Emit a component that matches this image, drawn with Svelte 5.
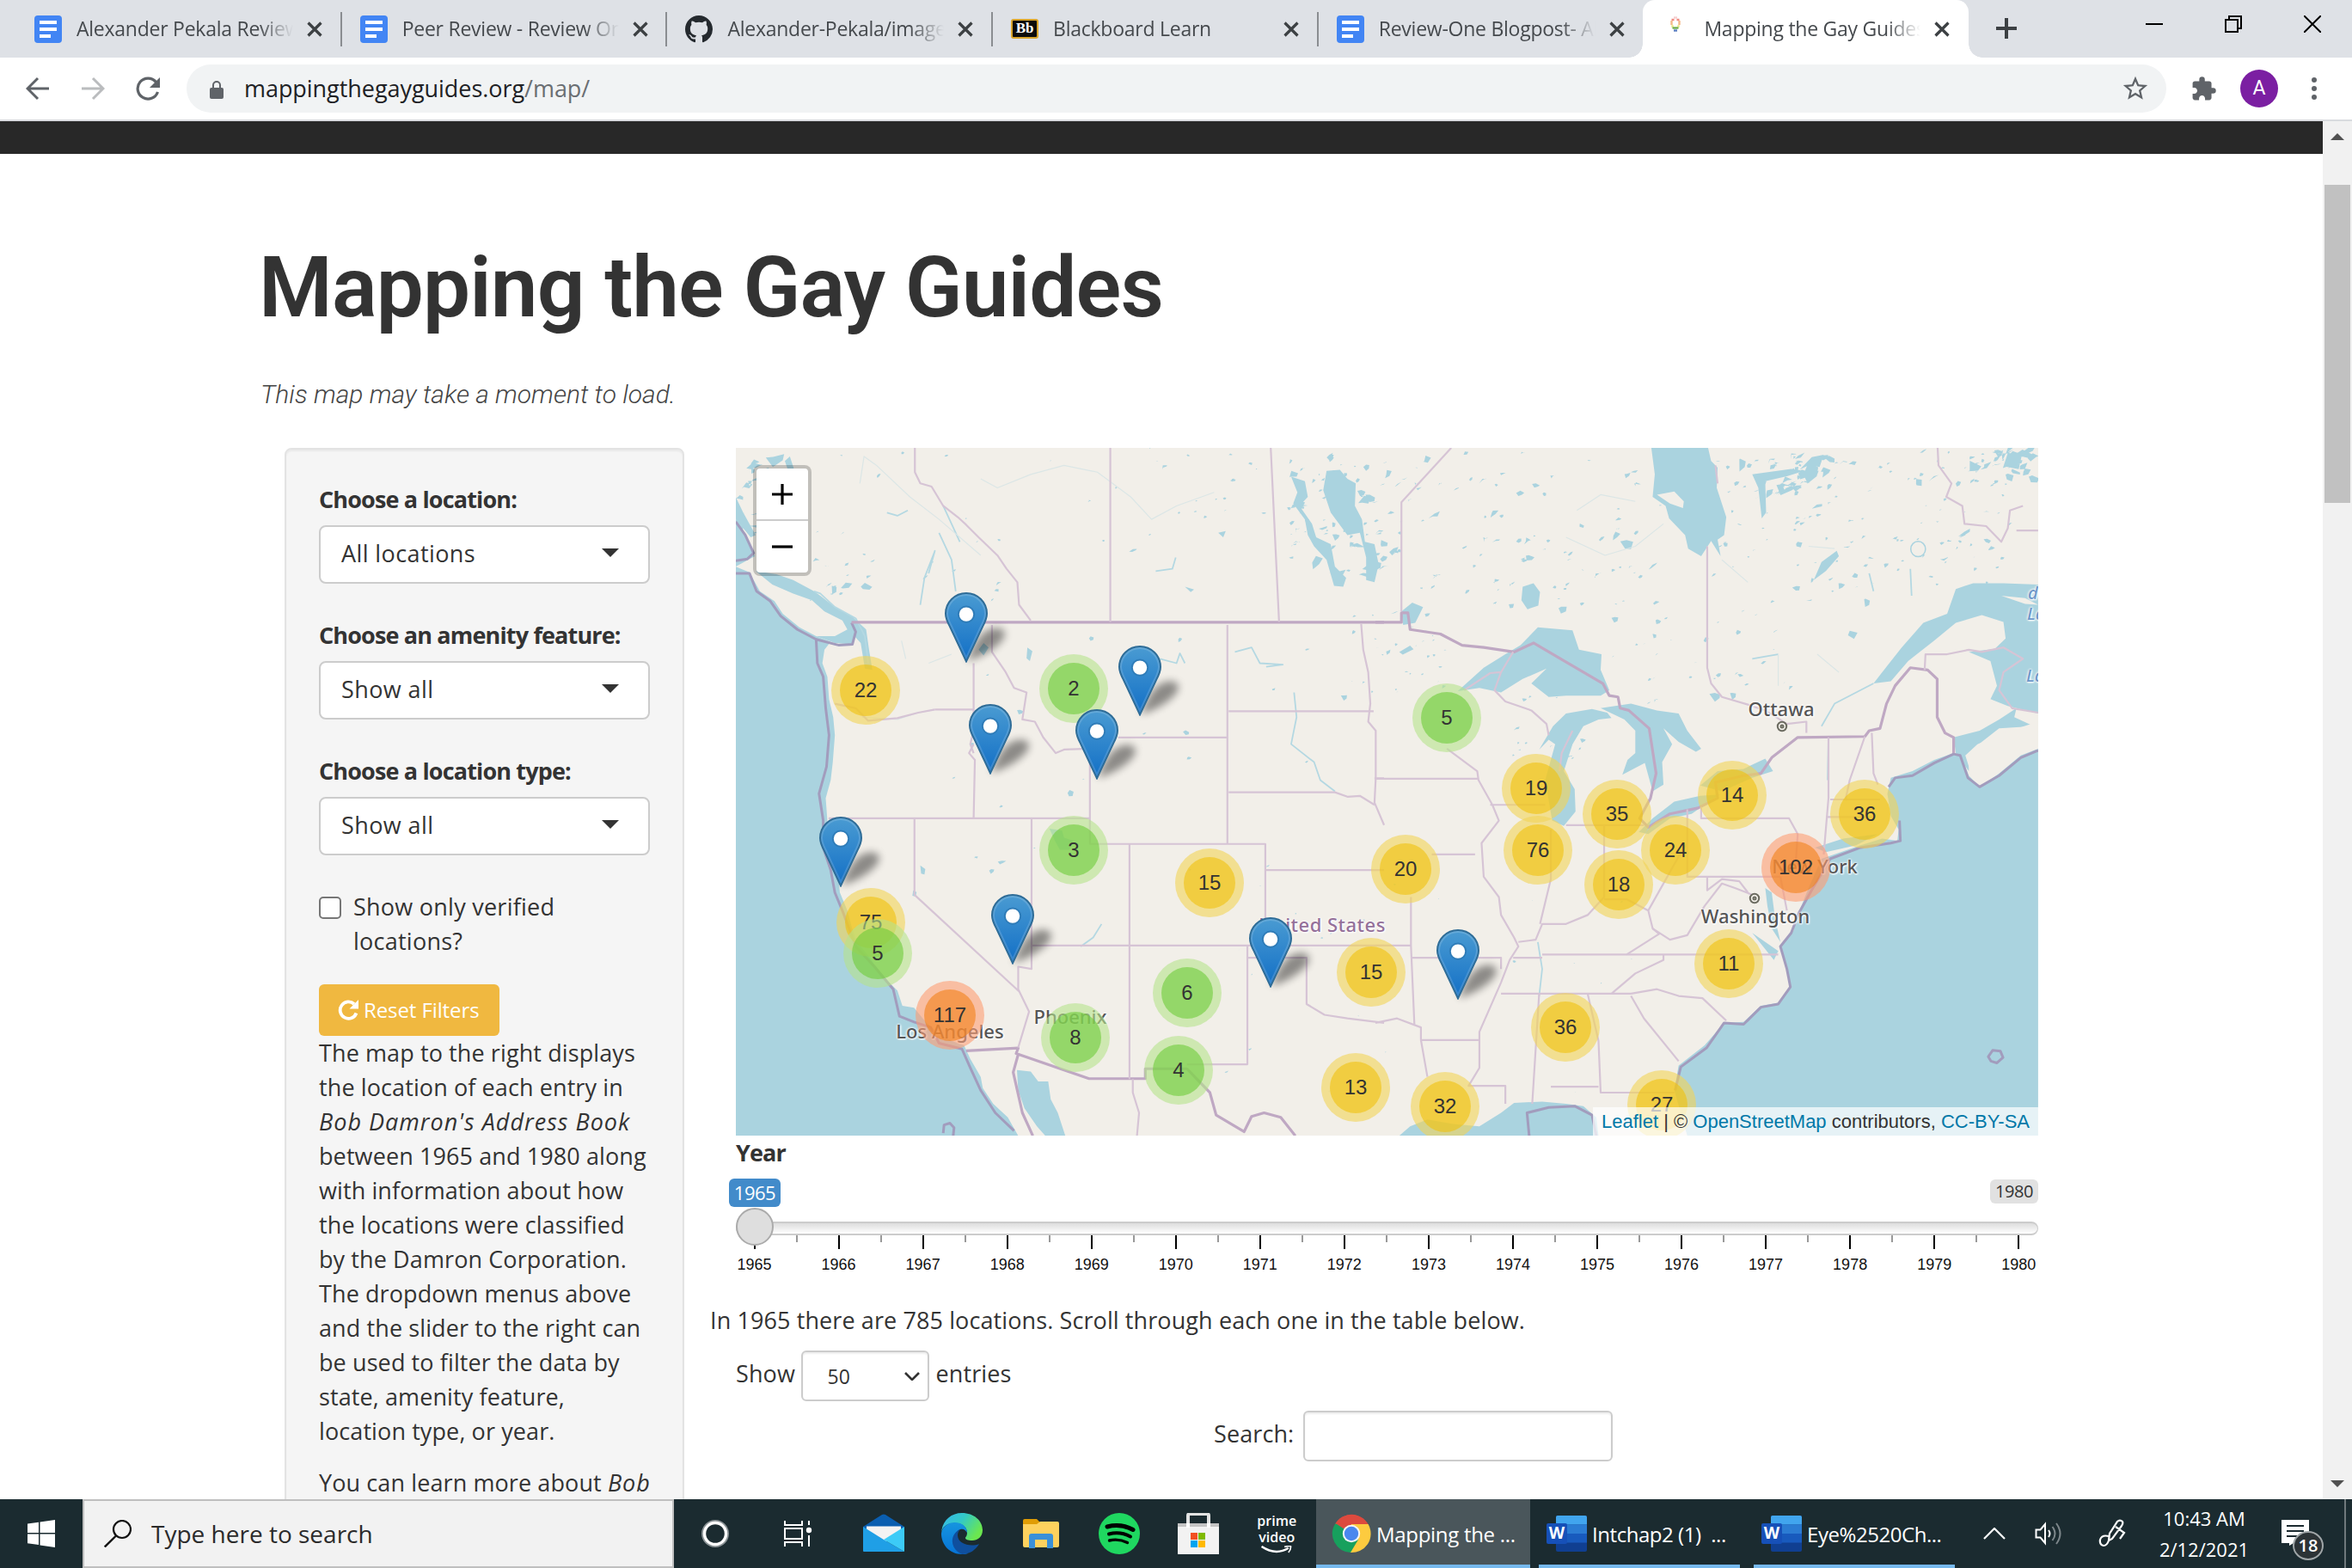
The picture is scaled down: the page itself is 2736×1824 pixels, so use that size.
<script>
  const tabs = [
    { icon: 'doc', title: 'Alexander Pekala Review ' },
    { icon: 'doc', title: 'Peer Review - Review One' },
    { icon: 'github', title: 'Alexander-Pekala/images' },
    { icon: 'bb', title: 'Blackboard Learn' },
    { icon: 'doc', title: 'Review-One Blogpost- Al' },
    { icon: 'pin', title: 'Mapping the Gay Guides', active: true }
  ];

  const filters = [
    { label: 'Choose a location:', value: 'All locations' },
    { label: 'Choose an amenity feature:', value: 'Show all' },
    { label: 'Choose a location type:', value: 'Show all' }
  ];

  const years = Array.from({ length: 16 }, (_, i) => 1965 + i);

  // Cluster centres in map pixels
  const clusters = [
    [151, 282, 22, 'y'], [393, 280, 2, 'g'], [393, 468, 3, 'g'], [551, 506, 15, 'y'],
    [157, 552, 75, 'y'], [165, 588, 5, 'g'], [249, 660, 117, 'o'], [395, 686, 8, 'g'],
    [525, 634, 6, 'g'], [515, 724, 4, 'g'], [739, 610, 15, 'y'], [721, 744, 13, 'y'],
    [827, 314, 5, 'g'], [931, 396, 19, 'y'], [933, 468, 76, 'y'], [1025, 426, 35, 'y'],
    [1027, 508, 18, 'y'], [1093, 468, 24, 'y'], [1159, 404, 14, 'y'], [1313, 426, 36, 'y'],
    [1233, 488, 102, 'o'], [1155, 600, 11, 'y'], [965, 674, 36, 'y'], [825, 766, 32, 'y'],
    [1077, 764, 27, 'y'], [779, 490, 20, 'y']
  ];

  // Pin tips in map pixels
  const pins = [
    [268, 249], [470, 311], [296, 379], [420, 385], [122, 510], [322, 600], [622, 627], [840, 641]
  ];

  // Small lakes scattered over the northern half of the map
  let seed = 7;
  const rnd = () => (seed = (seed * 16807) % 2147483647) / 2147483647;
  function scatter(n, x, y, w, h, size) {
    let d = '';
    for (let i = 0; i < n; i++) {
      const px = x + rnd() * w;
      const py = y + rnd() * h;
      const s = size * (0.3 + rnd() * rnd());
      d += `M${px.toFixed(1)} ${py.toFixed(1)}l${(s * rnd()).toFixed(1)} ${(-s * rnd()).toFixed(1)} ${(s * 0.9).toFixed(1)} ${(s * (rnd() - 0.5)).toFixed(1)} ${(-s * rnd() * 0.6).toFixed(1)} ${(s * rnd()).toFixed(1)} ${(-s * 0.8).toFixed(1)} ${(s * (rnd() - 0.3)).toFixed(1)}z`;
    }
    return d;
  }
  const lakes =
    scatter(40, 480, 0, 260, 110, 5) +
    scatter(60, 640, 10, 120, 140, 10) +
    scatter(90, 760, 0, 320, 200, 7) +
    scatter(140, 1130, 5, 360, 180, 6) +
    scatter(40, 1160, 10, 110, 45, 13) +
    scatter(22, 1435, 0, 70, 36, 16) +
    scatter(30, 1000, 190, 240, 110, 6) +
    scatter(26, 10, 0, 480, 180, 5) +
    scatter(26, 0, 10, 50, 90, 14) +
    scatter(18, 60, 120, 110, 60, 8) +
    scatter(30, 700, 180, 130, 110, 4) +
    scatter(22, 230, 200, 450, 300, 5) +
    scatter(22, 560, 500, 500, 260, 3) +
    scatter(16, 900, 270, 90, 100, 5);
</script>

<div class="screen">
  <div class="tabstrip">
    {#each tabs as tab}
      <div class="tab" class:active={tab.active}>
        <span class="fav">
          {#if tab.icon === 'doc'}
            <svg viewBox="0 0 32 32"><rect width="32" height="32" rx="4" fill="#4285f4" /><path d="M6 6h20v4H6zM6 14h20v4H6zM6 22h13v4H6z" fill="#fff" /></svg>
          {:else if tab.icon === 'github'}
            <svg viewBox="0 0 16 16"><path fill="#24292e" d="M8 0C3.58 0 0 3.58 0 8c0 3.54 2.29 6.53 5.47 7.59.4.07.55-.17.55-.38 0-.19-.01-.82-.01-1.49-2.01.37-2.53-.49-2.69-.94-.09-.23-.48-.94-.82-1.13-.28-.15-.68-.52-.01-.53.63-.01 1.08.58 1.23.82.72 1.21 1.87.87 2.33.66.07-.52.28-.87.51-1.07-1.78-.2-3.64-.89-3.64-3.95 0-.87.31-1.59.82-2.15-.08-.2-.36-1.02.08-2.12 0 0 .67-.21 2.2.82.64-.18 1.32-.27 2-.27s1.36.09 2 .27c1.53-1.04 2.2-.82 2.2-.82.44 1.1.16 1.92.08 2.12.51.56.82 1.27.82 2.15 0 3.07-1.87 3.75-3.65 3.95.29.25.54.73.54 1.48 0 1.07-.01 1.93-.01 2.2 0 .21.15.46.55.38A8.01 8.01 0 0 0 16 8c0-4.42-3.58-8-8-8z" /></svg>
          {:else if tab.icon === 'bb'}
            <span class="bb">Bb</span>
          {:else}
            <svg viewBox="0 0 32 32"><g fill="none" stroke-width="2.4"><path d="M14 2.500h4" stroke="#f6cfd0" /><path d="M11.500 5h3M17.500 5h3" stroke="#f08a80" /><path d="M11.500 6v5M20.500 6v5" stroke="#f3b98a" /><path d="M12.500 11v3M19.500 11v3" stroke="#ecea90" /><path d="M12.500 14.500h7" stroke="#6fae4e" /><path d="M14 17.500h4" stroke="#5a7fc0" /></g></svg>
          {/if}
        </span>
        <span class="tabtitle">{tab.title}</span>
        <svg class="close" viewBox="0 0 18 18"><path d="M1.500 1.500l15 15M16.500 1.500l-15 15" stroke="#3c4043" stroke-width="3.200" /></svg>
      </div>
    {/each}
    <svg class="plus" viewBox="0 0 24 24"><path d="M12 0v24M0 12h24" stroke="#3c4043" stroke-width="4" /></svg>
    <div class="winctl">
      <svg viewBox="0 0 20 20"><path d="M0 10h20" stroke="#000" stroke-width="2" /></svg>
      <svg viewBox="0 0 20 20"><path d="M1 5h14v14H1zM5 5V1h14v14h-4" stroke="#000" stroke-width="2" fill="none" /></svg>
      <svg viewBox="0 0 20 20"><path d="M0 0l20 20M20 0L0 20" stroke="#000" stroke-width="2" /></svg>
    </div>
  </div>

  <div class="toolbar">
    <svg class="nav" viewBox="0 0 28 28"><path d="M27 14H3M14 2L2 14l12 12" fill="none" stroke="#5f6368" stroke-width="3" /></svg>
    <svg class="nav" viewBox="0 0 28 28"><path d="M1 14h24M14 2l12 12-12 12" fill="none" stroke="#babcbe" stroke-width="3" /></svg>
    <svg class="nav" viewBox="0 0 28 28"><path d="M25.500 18A12 12 0 1 1 23.500 6.500" fill="none" stroke="#5f6368" stroke-width="3.200" /><path d="M28 1v12H16z" fill="#5f6368" /></svg>
    <div class="omnibox">
      <svg class="lock" viewBox="0 0 16 21"><rect y="8" width="16" height="13" rx="2" fill="#5f6368" /><path d="M4 9V5a4 4 0 0 1 8 0v4" fill="none" stroke="#5f6368" stroke-width="2" /></svg>
      <span class="url"><b>mappingthegayguides.org</b>/map/</span>
      <svg class="star" viewBox="0 0 24 24"><path fill="#5f6368" d="M22 9.240l-7.190-.620L12 2 9.190 8.630 2 9.240l5.460 4.730L5.820 21 12 17.270 18.180 21l-1.630-7.030L22 9.240zM12 15.400l-3.760 2.270 1-4.280-3.320-2.880 4.380-.380L12 6.100l1.710 4.040 4.380.380-3.320 2.880 1 4.280L12 15.400z" /></svg>
    </div>
    <svg class="puzzle" viewBox="0 0 24 24"><path fill="#5f6368" d="M20.500 11H19V7c0-1.100-.9-2-2-2h-4V3.500a2.500 2.500 0 0 0-5 0V5H4c-1.100 0-1.990.9-1.990 2v3.800H3.500c1.490 0 2.700 1.210 2.700 2.700s-1.210 2.700-2.700 2.700H2V20c0 1.100.9 2 2 2h3.800v-1.500c0-1.490 1.210-2.700 2.700-2.700s2.700 1.210 2.700 2.700V22H17c1.100 0 2-.9 2-2v-4h1.500a2.500 2.500 0 0 0 0-5z" /></svg>
    <span class="avatar">A</span>
    <svg class="dots" viewBox="0 0 8 28"><g fill="#5f6368"><circle cx="4" cy="4" r="3" /><circle cx="4" cy="14" r="3" /><circle cx="4" cy="24" r="3" /></g></svg>
  </div>

  <div class="viewport">
    <main class="page">
      <div class="darkbar"></div>
      <h1>Mapping the Gay Guides</h1>
      <p class="note">This map may take a moment to load.</p>

      <div class="columns">
        <aside class="well">
          {#each filters as f}
            <div class="group">
              <div class="label">{f.label}</div>
              <div class="select"><span>{f.value}</span><i></i></div>
            </div>
          {/each}
          <div class="check"><i></i><span>Show only verified<br />locations?</span></div>
          <div class="reset">
            <svg viewBox="0 0 24 24"><path d="M21.500 15.500A9.700 9.700 0 1 1 19 5" fill="none" stroke="#fff" stroke-width="3.800" /><path d="M24 0v10.500H13.500z" fill="#fff" /></svg>
            <span>Reset Filters</span>
          </div>
          <p>The map to the right displays<br />the location of each entry in<br /><em>Bob Damron's Address Book</em><br />between 1965 and 1980 along<br />with information about how<br />the locations were classified<br />by the Damron Corporation.<br />The dropdown menus above<br />and the slider to the right can<br />be used to filter the data by<br />state, amenity feature,<br />location type, or year.</p>
          <p>You can learn more about <em>Bob</em></p>
        </aside>

        <section class="content">
          <div class="map">
            <svg class="tiles" viewBox="856 521 1515 800" preserveAspectRatio="none">
              <rect x="856" y="521" width="1515" height="800" fill="#f2efe9" />
              <g transform="translate(856 521)"><path d={lakes} fill="#aad3df" /></g>

              <!-- western half -->
              <g transform="translate(850 510) scale(.48472 .52301)" stroke-linejoin="round">
                <g class="water">
                  <path d="M12 180L22 188 40 225 58 262 12 285 45 298 70 340 105 362 125 390 165 420 205 440 240 452 225 470 220 500 232 530 236 580 246 620 250 660 245 720 240 760 228 800 232 850 240 910 255 950 262 1010 280 1050 290 1085 303 1120 330 1150 345 1170 375 1205 400 1228 412 1262 440 1266 470 1300 500 1325 530 1340 560 1350 575 1380 600 1420 605 1445 630 1480 665 1510 690 1551H12z" />
                  <path d="M60 295L110 302 150 315 200 340 215 350 250 375 290 395 325 425 332 470 340 515 322 512 312 455 297 440 290 458 250 455 205 440 250 440 280 425 268 405 225 385 195 360 150 345 100 325z" />
                  <path d="M12 130L30 165 60 215 48 220 12 180zM130 50l12-10 14 40 10 50-6 4-14-40z" />
                  <path d="M687 1405L720 1408 738 1430 762 1430 768 1470 785 1500 803 1551H755L735 1530 705 1490 690 1450z" />
                  <path d="M1430 72L1462 70 1480 90 1500 100 1498 150 1515 180 1522 230 1545 235 1555 280 1545 320 1525 315 1525 265 1510 210 1480 215 1440 165 1422 115z" />
                  <path d="M1345 85L1378 95 1385 130 1365 150 1395 190 1405 220 1440 235 1450 285 1477 310 1470 330 1448 328 1430 270 1400 240 1385 215 1378 180 1350 145 1360 120z" />
                  <path d="M765 868L795 872 800 888 822 895 812 915 790 915 778 895zM712 465l12 8-6 22-8-6zM455 950l12 8-2 12-8-2zM438 1005l8 4-2 10-8-2zM595 470l12-15 12 10-12 18zM1170 210l18-4-6 14zM1090 330l22 6-8 6z" />
                </g>
                <g class="river">
                  <path d="M200 340L215 345 250 375 300 400 322 440 330 500M455 370L465 310 490 250 475 300M540 340L530 270 500 210M510 150L550 230M1210 475L1250 465 1270 500 1325 503 1285 508M1030 490L1070 500 1078 478 1090 500M1352 565L1358 620 1345 680 1400 720 1415 760 1450 785" />
                  <path d="M375 165L400 172 425 160M1020 295L1060 290 1068 265M840 1130L870 1110 890 1080" />
                </g>
                <g class="river faint">
                  <path d="M315 620L400 625 450 610 490 603M410 450L420 490M475 500L530 480M600 90L640 110 720 80 800 60 880 75 960 130 1010 180 1070 150 1160 120M310 100L320 40 350 60 430 130 500 180 600 260" />
                </g>
                <g class="halo">
                  <path d="M12 300L45 300 62 340 95 362 120 395 160 425 205 447 208 500 222 530 228 600 236 660 230 730 212 790 222 850 222 910 240 960 250 1010 270 1055 300 1130 345 1175 390 1225 405 1285 440 1298 480 1310 500 1345 555 1358 575 1400 600 1450 635 1500 680 1540" />
                  <path d="M12 185L35 215 55 255 40 268 12 272M205 447L260 460 292 458 300 430 290 410M510 1545l2-18 14-4 10 10-2 18" />
                </g>
                <g class="nation">
                  <path d="M290 409H1568M565 1362L690 1356 685 1368 860 1424H995V1402H1095L1150 1455 1165 1505 1232 1542 1250 1508 1280 1500 1320 1510 1355 1551M725 1551L700 1500 678 1410 690 1370" />
                </g>
                <g class="state">
                  <path d="M442 21V75L455 100 482 107 510 150 545 175 565 192 595 220 640 260 662 290 688 320 692 370 720 405M911 21V408M1296 21L1316 408" />
                  <path d="M627 415V475L660 520 680 555 710 565 700 625 730 630 750 665 780 700 800 692 862 690M583 500V603H490M583 603V650M583 680L572 700 586 715 583 845M583 650L575 680 583 700M235 845H862M930 665H1192M862 690V902H1283V1128M1192 415V902M1195 607H1543M1195 787H1450L1480 797 1510 795 1545 815" />
                  <path d="M1513 412L1518 470 1530 520 1535 590 1530 630 1548 650 1548 756 1545 810 1568 860M1285 960H1568M957 902V1425M722 1128H1568M722 845V1180L690 1175 690 1225 716 1275 690 1355M441 845V1015L692 1230M1240 1128V1392H1095M1238 1155H1382V1258L1425 1282 1480 1290 1568 1300M965 1425L965 1455 980 1500 975 1551" />
                  <path d="M250 590L300 600 330 628 400 622 450 610 490 603M1545 756H1568" />
                </g>
              </g>

              <!-- eastern half -->
              <g transform="translate(1600 510) scale(.50383 .52301)" stroke-linejoin="round">
                <g class="water">
                  <path d="M637 21H768L775 50 790 65 788 110 810 175 805 215 790 225 797 262 775 228 752 262 722 245 715 215 678 178 670 150 640 130 645 80z" />
                  <path d="M190 562L250 510 300 480 335 460 375 420 455 427 470 470 522 480 520 515 540 560 520 572 440 572 400 575 360 545 395 512 340 535 290 565 240 555z" />
                  <path d="M378 692L410 640 440 612 500 602 535 610 545 622 515 625 480 640 455 680 435 740 460 780 462 830 435 862 408 850 392 760 415 680 400 670z" />
                  <path d="M520 600L590 590 650 605 700 612 720 650 752 690 740 697 700 675 665 645 685 680 662 720 665 770 640 785 622 722 570 748 582 715 600 700 600 650 575 625z" />
                  <path d="M608 875L640 845 690 808 750 795 795 792 730 835 680 845 630 880zM750 772L790 740 850 735 900 712 918 740 870 755 800 785z" />
                  <path d="M1530 690L1490 705 1440 745 1395 775 1370 750 1352 705 1335 700 1290 715 1240 740 1190 755 1182 790 1190 840 1208 870 1205 895 1170 890 1120 905 1030 935 1000 1000 975 1060 965 1095 935 1130 950 1180 958 1220 930 1255 890 1262 850 1298 805 1300 760 1350 700 1395 690 1450 705 1500 720 1551H1530z" />
                  <path d="M1530 325L1450 322 1380 322 1340 335 1320 390 1265 410 1215 465 1170 520 1150 545 1190 540 1230 495 1290 450 1340 410 1400 393 1450 408 1455 445 1430 468 1370 475 1420 495 1435 550 1420 580 1460 595 1530 612z" />
                  <path d="M1335 665L1395 650 1440 625 1480 600 1475 620 1520 640 1440 645 1400 675 1370 700 1370 740 1340 700zM1015 910L1080 890 1160 880 1110 905 1040 920zM900 1000l15 10 8 60 12 50-20-30-10-50zM870 1100l60 40-10 20z" />
                  <path d="M55 1551L80 1530 120 1515 180 1525 240 1530 290 1500 320 1478 385 1475 440 1480 480 1485 510 1510 515 1551z" />
                  <path d="M340 330l25-8 15 20-4 30-25 8-14-20zM1012 315L1030 275 1065 250 1070 262 1040 295zM60 385l25-20 25 10-18 35-28 5zM1095 428l18 4-8 14-14-8zM55 475l25-14 8 8-25 12zM870 80L960 68 990 72 950 84 900 95 902 165 892 178 884 110z" />
                </g>
                <g fill="#f2efe9">
                  <path d="M650 125L690 118 712 140 710 155 680 145zM1445 350L1500 355 1530 370 1500 368zM1362 705L1390 680 1450 655 1530 630V690L1490 700 1440 735 1395 762 1375 745z" />
                </g>
                <g fill="none" stroke="#aad3df" stroke-width="3"><circle cx="1253" cy="246" r="17" /></g>
                <g class="river">
                  <path d="M1150 545L1060 590 1030 640M1046 665L1044 760M375 1120L385 1180 378 1240M1140 300L1150 340M1235 290L1238 350M870 490L930 480" />
                </g>
                <g class="river faint">
                  <path d="M440 220L530 260 600 240 665 190M1000 240L1060 245M930 480V550M1020 480L1070 520M800 270L860 320M465 160L520 125 600 140" />
                </g>
                <g class="halo">
                  <path d="M1530 694L1490 710 1440 750 1395 775 1368 755 1350 705 1335 702 1290 722 1240 750 1200 755 1185 775M1210 850L1212 895 1190 900 1120 910 1050 935 1010 1000 978 1055 960 1100 935 1130 950 1180 958 1220 930 1258 890 1265 850 1303 805 1300 765 1355 705 1398 692 1450M1415 1375l10-14 18 2 6 14-14 12-14-4zM355 1551L350 1500 400 1488 460 1485 500 1505 510 1551" />
                </g>
                <g class="nation">
                  <path d="M0 409H60V388L75 388 80 425 150 435 200 460 250 465 320 475 365 455 525 545 540 572 560 575 565 600 585 605 632 645 648 745 635 800 610 845 630 865 680 835 745 822 790 800 785 765 850 750 890 745 915 710 975 665 1130 663 1140 650 1165 645 1180 590 1200 550 1235 510 1275 515 1297 535 1297 620 1315 655 1335 665 1335 700" />
                </g>
                <g class="state">
                  <path d="M60 385V142L175 21M766 240V510L775 545 800 575 860 592 900 605 950 635 995 630 995 655M785 60L790 100M1298 21L1300 60 1330 100 1318 130 1355 150 1360 190 1410 195 1445 230 1460 200 1465 160 1495 150M1480 205H1530" />
                  <path d="M318 475L290 520 265 522 205 560M290 520L275 560 300 585 360 605 395 635 400 660M165 690L235 740 238 760 270 815 285 850 245 900 250 975 285 1020 290 1060 320 1110 330 1130 310 1160 290 1210 240 1320 240 1400 215 1440H300L300 1480M0 757H238M265 815H392M440 860H620M130 925H230M82 1020V1128M0 1128H82L90 1305M85 1155H290L290 1180M0 1300L50 1290 105 1310V1338H238M105 1338L120 1420" />
                  <path d="M528 860V1020L490 1060 440 1080 385 1080 370 1115 330 1120M405 870L405 980 380 1080M720 825V975H935M752 820V845H955L975 880 970 950M528 1025L580 1025 630 1050 700 930 720 900M630 1050L640 1090 680 1115 720 1105 760 1040 800 990 830 1000 870 1015M766 975V1005L800 980 840 985 860 1010M385 1148H930M290 1235H590M318 1155H385M545 1235L600 1190 665 1160 665 1148M378 1235L362 1480M490 1235L515 1340 520 1455H690M405 1442H515M590 1235L650 1225 700 1240 755 1245 810 1295M590 1240L620 1290 700 1385" />
                  <path d="M1046 665L1046 800 1035 925M1130 663L1095 760 1085 805M1146 655L1150 745 1160 770M1050 803H1165M1040 842H1150M935 975L950 1050M1530 610L1470 600 1440 560 1450 520 1495 490 1450 465 1400 475 1370 470 1320 480 1270 480 1268 515M580 1148L655 1102 640 1090M455 650L430 700 425 740" />
                </g>
              </g>
            </svg>

            <span class="place country" style="left:682px;top:554px">United States</span>
            <span class="place" style="left:1216px;top:303px">Ottawa</span>
            <span class="place" style="left:1186px;top:544px">Washington</span>
            <span class="place" style="left:1255px;top:486px">New York</span>
            <span class="place" style="left:249px;top:678px">Los Angeles</span>
            <span class="place" style="left:389px;top:661px">Phoenix</span>
            <svg class="capital" style="left:1217px;top:324px" viewBox="0 0 14 14"><circle cx="7" cy="7" r="5.200" /><circle cx="7" cy="7" r="1.500" /></svg>
            <svg class="capital" style="left:1185px;top:524px" viewBox="0 0 14 14"><circle cx="7" cy="7" r="5.200" /><circle cx="7" cy="7" r="1.500" /></svg>
            <span class="sea" style="left:1503px;top:155px">du</span>
            <span class="sea" style="left:1502px;top:179px">Lau</span>
            <span class="sea" style="left:1501px;top:251px">Lau</span>

            {#each pins as [x, y]}
              <svg class="shadow" viewBox="0 0 82 82" style="left:{x}px;top:{y}px"><path d="M2 80C8 64 14 50 26 44 40 38 50 44 44 54 36 66 16 76 2 80z" /></svg>
            {/each}
            {#each clusters as [x, y, n, c]}
              <span class="cluster {c}" style="left:{x}px;top:{y}px"><b>{n}</b></span>
            {/each}
            {#each pins as [x, y]}
              <svg class="pin" viewBox="0 0 25 41" style="left:{x}px;top:{y}px">
                <defs><linearGradient id="pinfill" x1="0" y1="0" x2="0" y2="1"><stop offset="0" stop-color="#4a9bd2" /><stop offset="1" stop-color="#126fc6" /></linearGradient></defs>
                <path d="M12.500.5C5.800.5.500 5.900.500 12.400c0 2.900 1 4.800 2.400 7.400L12.500 40.200l9.600-20.400c1.400-2.600 2.400-4.500 2.400-7.400C24.500 5.900 19.200.500 12.500.500z" fill="url(#pinfill)" stroke="#2e6c97" />
                <path d="M12.500 1.500C6.400 1.500 1.500 6.500 1.500 12.400c0 2.700 1 4.500 2.300 7L12.500 38l8.700-18.600c1.300-2.500 2.300-4.300 2.300-7 0-5.900-4.900-10.900-11-10.900z" fill="none" stroke="#fff" stroke-opacity=".15" />
                <circle cx="12.500" cy="12.800" r="4.600" fill="#fff" stroke="#2f7cb8" />
              </svg>
            {/each}

            <div class="zoom">
              <span><svg viewBox="0 0 24 24"><path d="M12 0v24M0 12h24" stroke="#000" stroke-width="3.200" /></svg></span>
              <span><svg viewBox="0 0 24 24"><path d="M0 12h24" stroke="#000" stroke-width="3.200" /></svg></span>
            </div>
            <div class="attribution"><a>Leaflet</a> | © <a>OpenStreetMap</a> contributors, <a>CC-BY-SA</a></div>
          </div>

          <div class="slider">
            <div class="label">Year</div>
            <div class="badges"><span class="from">1965</span><span class="max">1980</span></div>
            <div class="track"><i class="knob"></i></div>
            <div class="ticks">
              {#each years as y}<span>{y}</span>{/each}
            </div>
          </div>

          <p class="summary">In 1965 there are 785 locations. Scroll through each one in the table below.</p>
          <div class="length">
            <span class="w1">Show</span>
            <div class="lensel"><span>50</span><svg viewBox="0 0 18 10"><path d="M1 1l8 8 8-8" fill="none" stroke="#333" stroke-width="2.600" /></svg></div>
            <span>entries</span>
          </div>
          <div class="search"><span>Search:</span><i></i></div>
        </section>
      </div>
    </main>

    <div class="scrollbar">
      <svg viewBox="0 0 16 8"><path d="M0 8L8 0l8 8z" fill="#505050" /></svg>
      <i></i>
      <svg viewBox="0 0 16 8"><path d="M0 0l8 8 8-8z" fill="#505050" /></svg>
    </div>
  </div>

  <div class="taskbar">
    <div class="start"><svg viewBox="0 0 32 32"><path d="M0 4.500L13 2.700V15H0zM14.500 2.500L32 0v15H14.500zM0 16.500h13v12.400L0 27.200zM14.500 16.500H32V32l-17.500-2.500z" fill="#fff" /></svg></div>
    <div class="tasksearch">
      <svg viewBox="0 0 32 32"><circle cx="21" cy="11" r="10" fill="none" stroke="#111" stroke-width="2.200" /><path d="M14 18.500L.800 31.500" stroke="#111" stroke-width="2.400" /></svg>
      <span>Type here to search</span>
    </div>
    <div class="cell wide"><svg viewBox="0 0 48 48"><circle cx="24" cy="24" r="14.500" fill="none" stroke="#8b9396" stroke-width="3" /><circle cx="24" cy="24" r="12.500" fill="none" stroke="#fff" stroke-width="3.400" /></svg></div>
    <div class="cell wide last"><svg viewBox="0 0 48 48"><path d="M9 9v5h20V9M9 18h20v12H9zM9 39v-5h20v5M37 9v5M37 26v13" fill="none" stroke="#fff" stroke-width="2" /><circle cx="37" cy="20" r="3.200" fill="#fff" /></svg></div>
    <div class="cell"><svg viewBox="0 0 48 48"><path d="M0 16L22 2q2-1 4 0l22 14v4H0z" fill="#0a5eb0" /><path d="M4 15.500h40V26L24 34 4 26z" fill="#f3f3f3" /><path d="M0 16l24 15L48 45H1q-1 0-1-1z" fill="#1f9fe6" /><path d="M48 16L24 31l24 14z" fill="#3ccbf7" /></svg></div>
    <div class="cell">
      <svg viewBox="0 0 48 48">
        <defs>
          <linearGradient id="eg1" x1="0" y1="0" x2="1" y2=".5"><stop offset="0" stop-color="#35b6ee" /><stop offset=".5" stop-color="#33c9c6" /><stop offset="1" stop-color="#6be74f" /></linearGradient>
          <linearGradient id="eg2" x1="0" y1="0" x2="0" y2="1"><stop offset="0" stop-color="#1695df" /><stop offset="1" stop-color="#0673d6" /></linearGradient>
        </defs>
        <path d="M0 23C1 9 11 0 24 0c14 0 24 9 24 20 0 8-6 12-12 12-5 0-8-1-8-3 0-1 2-2 2-6 0-6-5-11-13-11C8 11 1 16 0 23z" fill="url(#eg1)" />
        <path d="M0 24C1 16 8 11 16 11c8 0 14 5 14 12-2-4-5-5-8-4-9 3-11 22 9 28-3 1-5 1-7 1C10 48 0 37 0 24z" fill="url(#eg2)" />
        <path d="M22 19c-12 5-13 22 2 29 9 0 16-5 20-12-10 4-25 0-25-10 0-3 1-5 3-7z" fill="#0f4f9e" />
      </svg>
    </div>
    <div class="cell"><svg viewBox="0 0 48 48"><path d="M3 9q0-2 2-2h14l4 4v4H3z" fill="#e09c05" /><path d="M3 13h16l4-3h20q2 0 2 2v26q0 2-2 2H5q-2 0-2-2z" fill="#fdd15e" /><path d="M10 41V27q0-3 3-3h22q3 0 3 3v14h-7V31H17v10z" fill="#3a90d8" /></svg></div>
    <div class="cell"><svg viewBox="0 0 48 48"><circle cx="24" cy="24" r="24" fill="#1fd760" /><g fill="none" stroke="#000" stroke-linecap="round"><path d="M10 16q16-4 30 3.500" stroke-width="5" /><path d="M12 24.500q13-3.500 25 3" stroke-width="4" /><path d="M12.500 32q11-2.500 21 2.500" stroke-width="3.400" /></g></svg></div>
    <div class="cell"><svg viewBox="0 0 48 48"><path d="M12 14V3q0-2 2-2h20q2 0 2 2v11" fill="none" stroke="#e3e3e3" stroke-width="4" /><path d="M0 12h48v5H0z" fill="#c4c4c4" /><path d="M0 16h48v32H0z" fill="#f2f2f2" /><path d="M10 12h4v5h-4zM34 12h4v5h-4z" fill="#fff" /><path d="M15 23h8v8h-8z" fill="#f25022" /><path d="M24 23h8v8h-8z" fill="#7fba00" /><path d="M15 32h8v8h-8z" fill="#00a4ef" /><path d="M24 32h8v8h-8z" fill="#ffb900" /></svg></div>
    <div class="cell prime"><span>prime</span><span>video</span><svg viewBox="0 0 40 12"><path d="M1 1q18 12 34 2" fill="none" stroke="#fff" stroke-width="2.600" /><path d="M30 1.500q9-2 8 0 0 4-3 7" fill="none" stroke="#fff" stroke-width="1.800" /></svg></div>
    <div class="app on">
      <svg viewBox="0 0 48 48">
        <path d="M24 24L4.950 13A22 22 0 0 1 43.050 13z" fill="#dc4a3e" />
        <path d="M24 24L24 13h19.600A22 22 0 0 1 22 45.900z" fill="#fdcb3f" />
        <path d="M24 24l8 7-9 15A22 22 0 0 1 5.500 12z" fill="#17a05d" />
        <path d="M5.500 12.500A22 22 0 0 1 43.500 13H24z" fill="#dc4a3e" />
        <circle cx="24" cy="24" r="10.200" fill="#f3f5f6" /><circle cx="24" cy="24" r="8.200" fill="#4a87ee" />
      </svg>
      <span>Mapping the ...</span>
    </div>
    {#each ['Intchap2 (1)  ...', 'Eye%2520Ch...'] as name}
      <div class="app word">
        <svg viewBox="0 0 48 42"><rect x="11" width="36" height="42" rx="2" fill="#103f91" /><path d="M11 2q0-2 2-2h32q2 0 2 2v8.500H11z" fill="#41a5ee" /><path d="M11 10.500h36V21H11z" fill="#2b7cd3" /><path d="M11 21h36v10.500H11z" fill="#185abd" /><rect y="9" width="24" height="24" rx="2" fill="#1650b8" /><text x="12" y="27" text-anchor="middle">W</text></svg>
        <span>{name}</span>
      </div>
    {/each}
    <svg class="chev" viewBox="0 0 26 14"><path d="M1 13L13 1l12 12" fill="none" stroke="#fff" stroke-width="2.200" /></svg>
    <svg class="vol" viewBox="0 0 34 30"><path d="M1.500 10.500h5L12 4v22l-5.500-6.500h-5z" fill="none" stroke="#fff" stroke-width="2" /><path d="M16 11q3 4 0 8" fill="none" stroke="#fff" stroke-width="2" /><path d="M20.500 7q6 8 0 16M25 3q9 12 0 24" fill="none" stroke="#7d878b" stroke-width="2" /></svg>
    <svg class="pen" viewBox="0 0 32 34"><path d="M12 25L13 17 22 3q3-3 6 0 1 2-1 5L16 23zM20 9l10 7-5 7M12 20q-8-2-10 4-1 6 4 7 4 0 6-6" fill="none" stroke="#fff" stroke-width="2.200" /></svg>
    <div class="clock"><span>10:43 AM</span><span>2/12/2021</span></div>
    <div class="notif">
      <svg viewBox="0 0 32 30"><path d="M0 0h32v27H14l-5 3v-3H0z" fill="#fff" /><path d="M6 7h20M6 13h20M6 19h12" stroke="#1b2a2f" stroke-width="2" /></svg>
      <span>18</span>
    </div>
  </div>
</div>

<style>
  :global(body) { margin: 0; background: #fff; }
  .screen {
    width: 2736px; height: 1824px; overflow: hidden; display: flex; flex-direction: column;
    font-family: 'Open Sans', 'Noto Sans', sans-serif; color: #333;
  }
  svg { display: block; }

  /* browser chrome */
  .tabstrip { height: 67px; box-sizing: border-box; background: #dee1e6; display: flex; padding-left: 18px; flex: none; }
  .tab { position: relative; width: 378.700px; height: 67px; box-sizing: border-box; display: flex; align-items: center; padding: 0 0 0 22px; flex: none; }
  .tab:not(.active)::after { content: ''; position: absolute; right: -1px; top: 14px; width: 2px; height: 40px; background: #8a8d91; }
  .tab:nth-child(5)::after { display: none; }
  .tab.active { background: #fff; border-radius: 14px 14px 0 0; }
  .tab.active::before, .tab.active::after { content: ''; position: absolute; bottom: 0; width: 16px; height: 16px; }
  .tab.active::before { left: -16px; background: radial-gradient(circle at 0 0, transparent 15.500px, #fff 16px); }
  .tab.active::after { right: -16px; background: radial-gradient(circle at 100% 0, transparent 15.500px, #fff 16px); }
  .fav { width: 32px; height: 32px; flex: none; display: flex; align-items: center; }
  .fav svg { width: 32px; height: 32px; }
  .bb { width: 32px; height: 23px; box-sizing: border-box; border: 2px solid #d9a42b; background: #0b0b0b; color: #fff; font: bold 17px/18px 'Liberation Serif', serif; text-align: center; border-radius: 3px; }
  .tabtitle {
    margin-left: 17px; width: 252px; height: 40px; line-height: 38px; font-size: 23px; letter-spacing: -0.250px; color: #45494d;
    overflow: hidden; white-space: pre; flex: none;
    -webkit-mask-image: linear-gradient(90deg, #000 212px, transparent 252px); mask-image: linear-gradient(90deg, #000 212px, transparent 252px);
  }
  .close { width: 18px; height: 18px; margin-left: 16px; }
  .plus { width: 24px; height: 24px; margin: 21px 0 0 32px; }
  .winctl { display: flex; gap: 72px; margin: 18px 0 0 150px; }
  .winctl svg { width: 20px; height: 20px; }

  .toolbar { height: 74px; box-sizing: border-box; border-bottom: 2px solid #d9dbdf; display: flex; align-items: center; padding-left: 30px; flex: none; }
  .nav { width: 28px; height: 28px; margin-right: 36px; }
  .nav:nth-child(3) { margin-right: 31px; }
  .omnibox { width: 2303px; height: 56px; border-radius: 28px; background: #f1f3f4; display: flex; align-items: center; }
  .lock { width: 16px; height: 21px; margin: 2px 0 0 27px; }
  .url { margin-left: 24px; font-size: 27px; line-height: 50px; color: #6a6e72; letter-spacing: -0.050px; }
  .url b { font-weight: 400; color: #202124; }
  .star { width: 34px; height: 34px; margin-left: auto; margin-right: 19px; }
  .puzzle { width: 31px; height: 31px; margin-left: 28px; }
  .avatar { width: 44px; height: 44px; border-radius: 50%; background: #7b1fa2; color: #fff; font: 23px/44px Roboto, sans-serif; text-align: center; margin-left: 27px; }
  .dots { width: 8px; height: 28px; margin-left: 38px; }

  .viewport { height: 1603px; display: flex; flex: none; overflow: hidden; }
  .page { width: 2702px; height: 1603px; overflow: hidden; background: #fff; }
  .scrollbar { width: 34px; background: #f1f1f1; display: flex; flex-direction: column; align-items: center; box-sizing: border-box; padding: 14px 0; }
  .scrollbar svg { width: 16px; height: 8px; }
  .scrollbar i { width: 30px; height: 370px; margin: 52px 0 auto; background: #c1c1c1; }

  /* page */
  .darkbar { height: 38px; background: #282828; }
  h1 { margin: 101px 0 0 301px; font: 600 98px/110px Roboto, sans-serif; color: #333; letter-spacing: -0.850px; white-space: nowrap; }
  .note { margin: 47px 0 0 303px; font: italic 300 30px/44px Roboto, sans-serif; color: #444; white-space: nowrap; }
  .columns { display: flex; margin: 40px 0 0 331px; align-items: flex-start; font-size: 27px; line-height: 40px; letter-spacing: 0.100px; white-space: nowrap; }
  .well { width: 465px; height: 1300px; box-sizing: border-box; border: 2px solid #e3e3e3; border-radius: 8px; background: #f5f5f5; padding: 38px; box-shadow: inset 0 2px 2px rgba(0, 0, 0, 0.05); flex: none; }
  .label { font-weight: 700; height: 40px; letter-spacing: -0.850px; }
  .group { margin-bottom: 40px; }
  .select { margin-top: 10px; width: 385px; height: 68px; box-sizing: border-box; border: 2px solid #ccc; border-radius: 8px; background: #fff; display: flex; align-items: center; justify-content: space-between; padding: 0 34px 2px 24px; letter-spacing: 0.400px; }
  .select i { border: 10px solid transparent; border-top-color: #333; border-bottom: 0; margin-top: -2px; }
  .check { display: flex; gap: 14px; height: 80px; margin-bottom: 30px; letter-spacing: 0.250px; }
  .check i { width: 26px; height: 26px; box-sizing: border-box; border: 2px solid #767676; border-radius: 5px; background: #fff; margin-top: 8px; }
  .reset { width: 210px; height: 60px; box-sizing: border-box; background: #f0b840; border-radius: 6px; display: flex; align-items: center; padding-left: 22px; color: #fff; font-size: 24px; font-weight: 500; letter-spacing: -0.100px; }
  .reset svg { width: 24px; height: 24px; margin-right: 6px; }
  .well p { margin: 0 0 20px; }
  .well em { letter-spacing: 1px; }

  .content { margin-left: 30px; padding-left: 30px; width: 1515px; }
  .map { position: relative; width: 1515px; height: 800px; overflow: hidden; background: #f2efe9; letter-spacing: 0; }
  .tiles { width: 1515px; height: 800px; }
  .water { fill: #aad3df; }
  .tiles path { vector-effect: non-scaling-stroke; }
  .river, .halo, .nation, .state { fill: none; }
  .river { stroke: #b4d8e2; stroke-width: 1.800; }
  .faint { stroke: #dbe6e6; stroke-width: 1.200; }
  .halo { stroke: #a29cbd; stroke-width: 3; }
  .nation { stroke: #bfa8c3; stroke-width: 3.200; }
  .state { stroke: #d6c4d5; stroke-width: 2.200; }
  .place, .sea { position: absolute; transform: translate(-50%, -50%); font: 500 22px/28px 'Noto Sans', sans-serif; color: #555; text-shadow: 0 0 3px #fff, 0 0 3px #fff, 1px 1px 2px #fff; }
  .country { color: #94709a; letter-spacing: 0.500px; }
  .sea { transform: translate(0, 0); font-style: italic; color: #6d97c9; font-size: 20px; }
  .capital { position: absolute; width: 14px; height: 14px; transform: translate(-50%, -50%); fill: none; stroke: #6b6b60; stroke-width: 2; }
  .cluster { position: absolute; width: 80px; height: 80px; margin: -40px 0 0 -40px; border-radius: 50%; display: flex; align-items: center; justify-content: center; }
  .cluster b { width: 60px; height: 60px; border-radius: 50%; font: 24px/60px 'Liberation Sans', Arial, sans-serif; text-align: center; color: #333; }
  .y { background: rgba(241, 211, 87, 0.6); }
  .y b { background: rgba(240, 194, 12, 0.6); }
  .g { background: rgba(181, 226, 140, 0.6); }
  .g b { background: rgba(110, 204, 57, 0.6); }
  .o { background: rgba(253, 156, 115, 0.6); }
  .o b { background: rgba(241, 128, 23, 0.6); }
  .pin { position: absolute; width: 50px; height: 82px; margin: -81px 0 0 -25px; }
  .shadow { position: absolute; width: 82px; height: 82px; margin: -81px 0 0 -1px; fill: #000; opacity: 0.42; filter: blur(5px); }
  .zoom { position: absolute; left: 20px; top: 20px; width: 60px; border: 4px solid rgba(0, 0, 0, 0.2); background-clip: padding-box; background-color: #fff; border-radius: 8px; }
  .zoom span { display: flex; align-items: center; justify-content: center; height: 60px; }
  .zoom span:first-child { border-bottom: 2px solid #ccc; height: 59px; }
  .zoom svg { width: 24px; height: 24px; }
  .attribution { position: absolute; right: 0; bottom: 0; height: 33px; padding: 0 10px; font: 22px/33px 'Liberation Sans', Arial, sans-serif; background: rgba(255, 255, 255, 0.7); }
  .attribution a { color: #0078a8; }

  .badges { display: flex; justify-content: space-between; align-items: flex-start; margin: 10px 0 0 -8px; }
  .from { width: 60px; height: 33px; background: #428bca; color: #fff; border-radius: 6px; font-size: 22px; line-height: 32px; text-align: center; letter-spacing: -0.500px; }
  .max { width: 56px; height: 28px; margin-top: 1px; background: #e1e1e1; border-radius: 6px; font-size: 20px; line-height: 27px; text-align: center; letter-spacing: -0.400px; }
  .track { position: relative; height: 16px; box-sizing: border-box; border: 2px solid #ccc; border-width: 2px 1px; border-radius: 8px; background: linear-gradient(#ddd, #fff); margin-top: 17px; }
  .knob { position: absolute; left: -1px; top: -18px; width: 44px; height: 44px; box-sizing: border-box; border: 2px solid #ababab; border-radius: 50%; background: #dedede; }
  .ticks { display: flex; margin-left: -27.500px; }
  .ticks span { position: relative; width: 98.060px; flex: none; padding-top: 23px; margin-bottom: 2px; text-align: center; font: 18px/22px 'Liberation Sans', Arial, sans-serif; color: #111; letter-spacing: 0; }
  .ticks span::before { content: ''; position: absolute; left: 48px; top: 0; width: 2px; height: 16px; background: #000; }
  .ticks span:not(:last-child)::after { content: ''; position: absolute; right: -1px; top: 0; width: 2px; height: 8px; background: #999; }
  .ticks span:first-child::before { top: 12px; height: 4px; }
  .summary { margin: 32px 0 0 -30px; }
  .length { display: flex; align-items: flex-start; margin-top: 15px; line-height: 53px; }
  .w1 { width: 75.500px; }
  .lensel { width: 149px; height: 59px; margin-right: 8px; box-sizing: border-box; border: 2px solid #ccc; border-radius: 6px; background: #fff; display: flex; align-items: center; justify-content: space-between; padding: 1px 9px 0 29px; font-size: 23px; box-shadow: inset 0 2px 2px rgba(0, 0, 0, 0.07); }
  .lensel svg { width: 18px; height: 10px; }
  .search { display: flex; margin: 11px 0 0 556px; line-height: 53px; }
  .search span { width: 104px; }
  .search i { width: 360px; height: 59px; box-sizing: border-box; border: 2px solid #ccc; border-radius: 6px; box-shadow: inset 0 2px 2px rgba(0, 0, 0, 0.07); }

  /* taskbar */
  .taskbar { height: 80px; background: #1b2b30; display: flex; align-items: center; color: #fff; flex: none; font-size: 24px; white-space: pre; }
  .start { width: 96px; display: flex; justify-content: center; }
  .start svg { width: 32px; height: 32px; }
  .tasksearch { width: 688px; height: 80px; box-sizing: border-box; border: 2px solid #bfbfbf; background: #f2f2f2; display: flex; align-items: center; padding-left: 23px; color: #2b2b2b; font-size: 28px; }
  .tasksearch svg { width: 32px; height: 32px; margin-right: 23px; }
  .cell { width: 91.500px; display: flex; justify-content: center; flex: none; }
  .cell svg { width: 48px; height: 48px; }
  .wide { width: 96px; }
  .last { margin-right: 6px; }
  .prime { flex-direction: column; align-items: center; font: 600 16px/19px 'Open Sans', sans-serif; }
  .prime svg { width: 38px; height: 11px; }
  .app { height: 80px; box-sizing: border-box; border-bottom: 4px solid #76b9ed; display: flex; align-items: center; flex: none; padding-top: 4px; }
  .on { width: 249px; background: #4a565b; padding-left: 17px; letter-spacing: -0.300px; }
  .on svg { width: 48px; height: 48px; margin-right: 5px; }
  .word { width: 234px; margin-left: 10px; padding-left: 9px; letter-spacing: -0.450px; }
  .word + .word { margin-left: 16px; }
  .word svg { width: 48px; height: 42px; margin-right: 5px; }
  .word text { font: 700 19px 'Open Sans', sans-serif; fill: #fff; letter-spacing: 0; }
  .chev { width: 28px; height: 14px; margin-left: 32px; }
  .vol { width: 34px; height: 30px; margin-left: 33px; }
  .pen { width: 32px; height: 34px; margin-left: 40px; }
  .clock { width: 130px; margin-left: 26px; display: flex; flex-direction: column; align-items: center; line-height: 36px; font-size: 22px; }
  .notif { position: relative; margin-left: 25px; width: 73px; height: 80px; border-right: 2px solid #6f797c; }
  .notif svg { width: 32px; height: 30px; margin-top: 24px; }
  .notif span { position: absolute; left: 13px; top: 37px; width: 36px; height: 34px; box-sizing: border-box; border: 2px solid #a0a6a8; border-radius: 50%; background: #2c3336; font-size: 20px; line-height: 29px; font-weight: 600; text-align: center; }
</style>
